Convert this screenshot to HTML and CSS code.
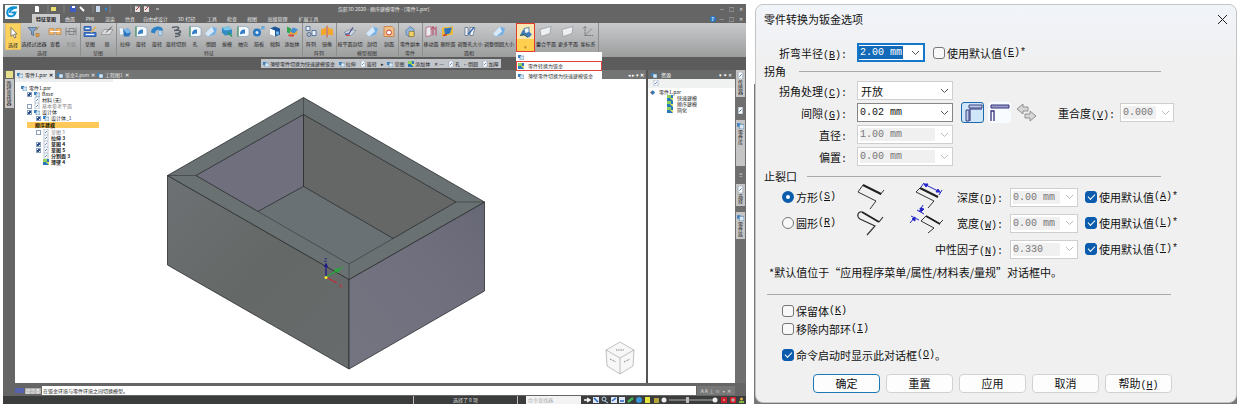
FILE: index.html
```html
<!DOCTYPE html>
<html lang="zh-CN">
<head>
<meta charset="utf-8">
<title>零件转换为钣金</title>
<link rel="stylesheet" href="styles.css">
</head>
<body>
<svg class="defs" aria-hidden="true">
  <symbol id="i-arrow" viewBox="0 0 14 12"><path d="M5 1v9l2-2 1.500 3.500 1.500-.7L8.500 7.500h2.500z" fill="#fff" stroke="#555" stroke-width=".7"/></symbol>
  <symbol id="i-filter" viewBox="0 0 14 12"><path d="M1 2h9L6.500 6v4L4.500 9V6z" fill="#7fa6d0" stroke="#456" stroke-width=".6"/><path d="M9 5l3-4M9 8h3v3H9z" fill="#e0a050" stroke="#b87a30" stroke-width=".8"/></symbol>
  <symbol id="i-view" viewBox="0 0 14 12"><path d="M1 3h5v6H1zM8 3h5v6H8z" fill="#f0b46a" stroke="#b98a50" stroke-width=".7"/><path d="M2 6h10" stroke="#fff"/></symbol>
  <symbol id="i-link" viewBox="0 0 14 12"><path d="M2 2v8M12 2v8M2 6h10M5 3h5v6H5z" fill="none" stroke="#777" stroke-width=".8"/></symbol>
  <symbol id="i-sketch" viewBox="0 0 14 12"><path d="M1 1h7v4H1zM1 7h12v4H1z" fill="#4d86d6" stroke="#2453a0" stroke-width=".8"/><path d="M2.500 3h4M3 9h8" stroke="#fff"/><path d="M8 7l5-6" stroke="#d8b060" stroke-width="1.500"/></symbol>
  <symbol id="i-pencil" viewBox="0 0 14 12"><path d="M1 9l3-5h9l-3 5z" fill="#dcdcdc" stroke="#888" stroke-width=".7"/><path d="M6 7l6-6" stroke="#555"/></symbol>
  <symbol id="i-plane" viewBox="0 0 14 12"><path d="M1 4l11-3-1 7-9 3z" fill="#edf0f2" stroke="#92979b" stroke-width=".7"/></symbol>
  <symbol id="i-extrude" viewBox="0 0 14 12"><path d="M1 2l5 1 1 5-5 2z" fill="#eef4fa" stroke="#9ab" stroke-width=".6"/><path d="M5 4l5-1 3 4-2 4H6z" fill="#2f75bd"/><path d="M5 4l5-1 3 4-4 1z" fill="#79b7ea"/></symbol>
  <symbol id="i-revolve" viewBox="0 0 14 12"><path d="M2 1h8l3 2v7l-3 1H2z" fill="#f3f8fc" stroke="#7c99b5" stroke-width=".6"/><path d="M2 1v10" stroke="#2b8a4b"/><path d="M4 9c0-4 2-5 5-5v4c-2 0-3 0-5 1z" fill="#327dc4"/></symbol>
  <symbol id="i-sweep" viewBox="0 0 14 12"><path d="M1 7c0-7 12-8 12-2l-3 1c0-3-5-2-5 2z" fill="#2e82c8"/><path d="M8 5h4v5H9z" fill="#bcd9f1" stroke="#6893b7" stroke-width=".6"/></symbol>
  <symbol id="i-helix" viewBox="0 0 14 12"><path d="M3 2c8-2 9 2 2 3 8-1 9 3 1 3 7 0 6 3 0 3" fill="none" stroke="#555c66" stroke-width="1.500"/></symbol>
  <symbol id="i-round" viewBox="0 0 14 12"><path d="M1 8L8 1l5 2-2 6-7 2z" fill="#72b2e8"/><path d="M1 8L8 1l2 5-6 5z" fill="#d7e9f8"/></symbol>
  <symbol id="i-draft" viewBox="0 0 14 12"><path d="M2 2l7-1 3 3v5l-7 1-3-3z" fill="#348cc6"/><path d="M2 2l7-1 3 3-7 1z" fill="#7cc8e8"/><path d="M8 7l4 4" stroke="#2b9a56" stroke-width="1.500"/></symbol>
  <symbol id="i-gear" viewBox="0 0 14 12"><circle cx="5" cy="7" r="4" fill="#2d79c2"/><circle cx="5" cy="7" r="1.500" fill="#dcecf8"/><path d="M8 5l4-4M9 1h3v3" stroke="#6aa7d8" stroke-width="1.200" fill="none"/></symbol>
  <symbol id="i-cube" viewBox="0 0 14 12"><path d="M2 3l5-2 5 2v6l-5 2-5-2z" fill="#1e5799"/><path d="M2 3l5 2v6L2 9z" fill="#fff"/><path d="M8 6h3v3H8z" fill="#71b6ef"/></symbol>
  <symbol id="i-body" viewBox="0 0 14 12"><path d="M2 1l4 2v5L2 7z" fill="#35a450"/><path d="M5 5h7v4H5z" fill="#e9a53a"/><path d="M8 2l5 2-4 4-4-2z" fill="#418fd2"/><path d="M3 9h6v2H4z" fill="#d4483c"/></symbol>
  <symbol id="i-pattern" viewBox="0 0 14 12"><path d="M2 1h4v4H2zM8 5h4v5H8z" fill="#edf2f8" stroke="#3c5f98" stroke-width=".8"/><circle cx="5" cy="9" r="2" fill="none" stroke="#3c5f98" stroke-width=".8"/></symbol>
  <symbol id="i-mirror" viewBox="0 0 14 12"><path d="M1 4l5-2v7l-5 1zM13 4L8 2v7l5 1z" fill="#f4a62c"/><path d="M7 0v12" stroke="#d9542b"/></symbol>
  <symbol id="i-cut" viewBox="0 0 14 12"><path d="M1 7l6-3 6 1-5 5z" fill="#cdd9e6" stroke="#6c7d90" stroke-width=".6"/><path d="M2 9l4-1 4-6" stroke="#4e4a8b" fill="none" stroke-width="1.200"/><path d="M3 10h4" stroke="#c44"/></symbol>
  <symbol id="i-section" viewBox="0 0 14 12"><path d="M2 1h8l2 2v8H2z" fill="#f4c08a" stroke="#c67a43" stroke-width=".8"/><circle cx="7" cy="7" r="2.500" fill="#fff" stroke="#c43d2c"/></symbol>
  <symbol id="i-copy" viewBox="0 0 14 12"><path d="M3 5l4-4 4 3v6l-5 1-3-2z" fill="#8fb6dc" stroke="#44648b" stroke-width=".6"/><path d="M6 6h5v5H6z" fill="#f1d16a" stroke="#856a20" stroke-width=".6"/></symbol>
  <symbol id="i-move" viewBox="0 0 14 12"><path d="M2 2l5-1v9l-5 1z" fill="#e9edf3" stroke="#b15370" stroke-width=".7"/><path d="M9 10V2M7 4l2-3 2 3M12 1v9" stroke="#b43f5e" fill="none"/></symbol>
  <symbol id="i-del" viewBox="0 0 14 12"><path d="M1 2l11-1v8L1 11z" fill="#f0bc35"/><path d="M3 3l8-1-2 6-5 1z" fill="#2d75bd"/><path d="M2 10l4-1" stroke="#c33" stroke-width="1.500"/></symbol>
  <symbol id="i-resize" viewBox="0 0 14 12"><path d="M2 2h3v8H2zM7 2h5l-2 8H7z" fill="#eef3f8" stroke="#536887" stroke-width=".7"/><path d="M5 9l6-7" stroke="#3166ae" stroke-width="1.200"/></symbol>
  <symbol id="i-sheet" viewBox="0 0 14 12"><path d="M1 9l3-6 3 2 2-1 4 4-3 3-5-2z" fill="#3f7cbd"/><path d="M5 2l5-1v5L6 7z" fill="#f4f7fa" stroke="#3b6da5" stroke-width=".8"/><path d="M1 9l4-1 4 3" stroke="#2e5e42" fill="none"/></symbol>
  <symbol id="i-axes" viewBox="0 0 14 12"><path d="M4 1v9h8M4 10l7-7M2 3l2-2 2 2" fill="none" stroke="#666" stroke-width=".8" stroke-dasharray="2 .6"/></symbol>
  <symbol id="i-part" viewBox="0 0 6 6"><path d="M0 1h3v3H0z" fill="#3c83c4"/><path d="M2 2h4v4H2z" fill="#d5e7f5" stroke="#41719b" stroke-width=".5"/></symbol>
  <symbol id="i-doc" viewBox="0 0 6 6"><path d="M1 0h4v6H1z" fill="#fff" stroke="#7a8ca5" stroke-width=".5"/><path d="M2 4l2-2" stroke="#3a72b6" stroke-width=".8"/></symbol>
  <symbol id="i-green" viewBox="0 0 6 6"><path d="M0 0h6v6H0z" fill="#2878be"/><path d="M0 0h4v3H0z" fill="#8fd05b"/><path d="M3 3h3v3z" fill="#e6e35b"/></symbol>
  <symbol id="chev" viewBox="0 0 9 6"><path d="M1 1l3.500 3.500L8 1" fill="none" stroke="currentColor" stroke-width="1"/></symbol>
</svg>

<main class="page">
<section class="app">
  <header class="title">
    <svg class="logo" viewBox="0 0 14 14"><rect width="14" height="14" fill="#f4fbff"/><path d="M12 2.500C6 1 2 4 2.200 8c.3 4.500 6.800 4.500 8.300-.5H6.500M12 2.500C8 3 5 5 4.500 8" fill="none" stroke="#0b8ed2" stroke-width="1.900"/></svg>
    <div class="title-main">
      <div class="caption">
        <div class="quick">
          <svg viewBox="0 0 130 8"><path d="M5 1h3l1 1v5H5z" fill="#fff"/><path d="M18 0v8M34 0v8M63 0v8M80 0v8M101 0v8" stroke="#999" stroke-width=".6"/><path d="M21 2h5v4h-5z" fill="#e9df6e"/><path d="M40 1h6v6h-6z" fill="#3d5cc4"/><path d="M42 1h3v2h-3z" fill="#fff"/><path d="M50 2l4 4" stroke="#fff" stroke-width="2"/><path d="M66 1h4v6h-4z" fill="#c8d8ec"/><path d="M74 4l3-2v4z" fill="#2a8ad8"/><path d="M105 1l5 1v5h-5zM114 1l5 1v5h-5z" fill="#e3e0e0"/><path d="M106 5l3-3M115 5l3-3" stroke="#c33"/><path d="M126 4h3" stroke="#ddd"/></svg>
        </div>
        <h1>浩辰3D 2020 - 顺序建模零件 - [零件1.par]</h1>
        <span class="win">—　□　✕</span>
      </div>
      <nav class="tabs">
        <a class="on" href="#home">特征草图</a><a href="#s">曲面</a><a href="#p">PMI</a><a href="#r">渲染</a><a href="#f">仿真</a><a class="wide" href="#d">自由式设计</a><a class="wide" href="#t">3D 打印</a><a href="#g">工具</a><a href="#j">检查</a><a href="#v">视图</a><a class="wide" href="#m">高级管理</a><a class="wide" href="#e">扩展工具</a>
        <span class="win"><b class="help">?</b>—　□　✕</span>
      </nav>
    </div>
  </header>

  <div class="ribbon">
    <div class="group"><div class="tools">
      <button class="tool t16 hot"><svg><use href="#i-arrow"/></svg>选择</button><button class="tool t26"><svg><use href="#i-filter"/></svg>选择过滤器</button><button class="tool t16"><svg><use href="#i-view"/></svg>查看</button><button class="tool t16 dim"><svg><use href="#i-link"/></svg>关联</button></div><h2>选择</h2></div>
    <div class="group"><div class="tools">
      <button class="tool t18"><svg><use href="#i-sketch"/></svg>草图</button><button class="tool t16"><svg><use href="#i-pencil"/></svg>▦</button></div><h2>草图</h2></div>
    <div class="group"><div class="tools">
      <button class="tool t16"><svg><use href="#i-extrude"/></svg>拉伸</button><button class="tool t16"><svg><use href="#i-revolve"/></svg>旋转</button><button class="tool t16"><svg><use href="#i-sweep"/></svg>旋转</button><button class="tool t22"><svg><use href="#i-helix"/></svg>旋转切割</button><button class="tool t16"><svg><use href="#i-revolve"/></svg>孔</button><button class="tool t16"><svg><use href="#i-round"/></svg>倒圆</button><button class="tool t16"><svg><use href="#i-draft"/></svg>拔模</button><button class="tool t16"><svg><use href="#i-revolve"/></svg>抽壳</button><button class="tool t16"><svg><use href="#i-gear"/></svg>筋板</button><button class="tool t16"><svg><use href="#i-cube"/></svg>倾斜</button><button class="tool t18"><svg><use href="#i-body"/></svg>添加体</button></div><h2>特征</h2></div>
    <div class="group"><div class="tools">
      <button class="tool t16"><svg><use href="#i-pattern"/></svg>阵列</button><button class="tool t16"><svg><use href="#i-mirror"/></svg>镜像</button></div><h2>阵列</h2></div>
    <div class="group"><div class="tools">
      <button class="tool t26"><svg><use href="#i-cut"/></svg>按平面剖切</button><button class="tool t18"><svg><use href="#i-round"/></svg>剖切</button><button class="tool t16"><svg><use href="#i-section"/></svg>剖面</button></div><h2>模型视图</h2></div>
    <div class="group"><div class="tools">
      <button class="tool t22"><svg><use href="#i-copy"/></svg>零件副本</button></div><h2>零件</h2></div>
    <div class="group plain"><div class="tools">
      <button class="tool t16"><svg><use href="#i-move"/></svg>移动面</button><button class="tool t18"><svg><use href="#i-del"/></svg>删除面</button><button class="tool t26"><svg><use href="#i-resize"/></svg>调整孔大小</button><button class="tool t32"><svg><use href="#i-round"/></svg>调整倒圆大小</button></div><h2>面相</h2></div>
    <div class="convert">
      <button class="convert-btn" aria-label="转换"><svg><use href="#i-sheet"/></svg><span>▾</span></button>
      <ul class="menu">
        <li><svg><use href="#i-part"/></svg></li>
        <li class="picked"><svg><use href="#i-green"/></svg>零件转换为钣金</li>
        <li><svg><use href="#i-part"/></svg>薄壁零件切换为快速建模钣金</li>
      </ul>
    </div>
    <div class="group"><div class="tools">
      <button class="tool t22"><svg><use href="#i-plane"/></svg>重合平面</button><button class="tool t22"><svg><use href="#i-plane"/></svg>更多平面</button><button class="tool t18"><svg><use href="#i-axes"/></svg>坐标系</button></div></div>
  </div>

  <div class="band">
    <div class="floatbar">
      <span><svg><use href="#i-part"/></svg>薄壁零件切换为快速建模钣金</span><span><svg><use href="#i-part"/></svg>拉伸</span><span><svg><use href="#i-doc"/></svg>旋转</span><span>▸</span><span><svg><use href="#i-part"/></svg>草图</span><span><svg><use href="#i-green"/></svg>添加体</span><span>✕ …</span><span><svg><use href="#i-doc"/></svg>孔</span><span>⌐ 倒圆</span><span><svg><use href="#i-doc"/></svg>加厚</span>
    </div>
  </div>

  <div class="work">
    <aside class="left"><i class="star"></i><span class="vert">路径查找器</span></aside>
    <section class="view">
      <div class="docs">
        <button class="doc on"><svg><use href="#i-part"/></svg>零件1.par <b>✕</b></button><button class="doc"><svg><use href="#i-part"/></svg>钣金2.psm <b>✕</b></button><button class="doc"><svg><use href="#i-part"/></svg>工程图1 <b>✕</b></button>
        <span class="docs-end">◂ ▸ ▾ <b>✕</b></span>
      </div>
      <div class="canvas">
        <svg class="model" viewBox="15 79 631 304" preserveAspectRatio="xMinYMin meet">
          <defs>
            <linearGradient id="gf" x1="0" y1="0" x2="1" y2="1"><stop offset="0" stop-color="#6d7174"/><stop offset=".5" stop-color="#646866"/><stop offset="1" stop-color="#686b6c"/></linearGradient>
            <linearGradient id="gr" x1="0" y1="1" x2="1" y2="0"><stop offset="0" stop-color="#747581"/><stop offset=".6" stop-color="#706f7e"/><stop offset="1" stop-color="#676876"/></linearGradient>
          </defs>
          <g stroke="#2b2d2e" stroke-width=".8" stroke-linejoin="round">
            <path d="M167.500 175.500L349 279.500V369L167.500 265z" fill="url(#gf)"/>
            <path d="M349 279.500L484.500 202v89L349 369z" fill="url(#gr)"/>
            <path d="M303.500 97.500L167.500 175.500 349 279.500 484.500 202z" fill="#6a7173"/>
            <path d="M303.500 114.500L196 175.500 258 211.500 303.500 186.500z" fill="#6f6f7e"/>
            <path d="M303.500 114.500V186.500L393 238.500 456 202z" fill="#646766"/>
            <path d="M303.500 186.500L258 211.500 349 264 393 238.500z" fill="#697174" stroke-width=".5"/>
            <path d="M303.500 97.500v17M167.500 175.500H196M349 264v15.500M484.500 202H456" fill="none" stroke-width=".5"/>
          </g>
          <g fill="none" stroke-width="1.300"><path d="M326 277V264M324.500 267l1.500-3 1.500 3" stroke="#1d1b91"/><path d="M326 277l14-8M334 270l6-1-3 4" stroke="#27a83d"/><path d="M326 277l11 6" stroke="#c22d35"/></g>
          <circle cx="326" cy="277.500" r="1.500" fill="#fbec2d"/>
          <g class="axis"><text x="324" y="262" fill="#1d1b91">Z</text><text x="341" y="270" fill="#27a83d">Y</text><text x="339" y="288" fill="#c22d35">X</text></g>
          <g fill="#f7f7f7" stroke="#999" stroke-width=".6"><path d="M620 342l14 8-1 16-13 8-13-8-1-16z"/><path d="M606 350l14 8 14-8M620 358v16" fill="none"/><path d="M610 359l6 3M624 362l6-3M616 350h8" stroke="#777" stroke-width="1" stroke-dasharray="1 .7"/></g>
        </svg>
        <div class="tree">
          <div class="r0"><svg><use href="#i-part"/></svg>零件1.par</div>
          <label class="r1"><input type="checkbox" checked><svg><use href="#i-part"/></svg>Base</label>
          <div class="r2"><svg><use href="#i-doc"/></svg>材料 (无)</div>
          <label class="r1 dim"><input type="checkbox"><svg><use href="#i-doc"/></svg>基本参考平面</label>
          <label class="r1"><input type="checkbox" checked><svg><use href="#i-part"/></svg>设计体</label>
          <label class="r3"><input type="checkbox" checked><svg><use href="#i-part"/></svg>设计体_1</label>
          <div class="seq">顺序建模</div>
          <label class="r3 dim"><input type="checkbox"><svg><use href="#i-doc"/></svg>草图 3</label>
          <div class="r4"><svg><use href="#i-doc"/></svg><b>拉伸 3</b></div>
          <label class="r3"><input type="checkbox" checked><svg><use href="#i-doc"/></svg><b>草图 4</b></label>
          <label class="r3"><input type="checkbox" checked><svg><use href="#i-doc"/></svg><b>草图 5</b></label>
          <div class="r4"><svg><use href="#i-doc"/></svg><b>分割面 3</b></div>
          <div class="r4"><svg><use href="#i-green"/></svg><b>薄壁 4</b></div>
        </div>
      </div>
    </section>
    <aside class="pane">
      <div class="pane-head"><svg><use href="#i-part"/></svg>资源<span>▾ ✦ ✕</span></div>
      <div class="pane-tools"><svg><use href="#i-doc"/></svg></div>
      <ul class="pane-list"><li class="root"><i>◆</i>零件1.par</li><li><svg><use href="#i-green"/></svg>快速建模</li><li><svg><use href="#i-green"/></svg>顺序建模</li><li><svg><use href="#i-green"/></svg>简化</li></ul>
    </aside>
    <aside class="right">
      <span class="vert lite"><svg><use href="#i-doc"/></svg>传感器</span>
      <svg class="gap-b"><use href="#i-doc"/></svg>
      <span class="vert tall"><svg><use href="#i-part"/></svg>零件库</span>
      <span class="dots">⠿</span>
      <span class="vert lite"><svg><use href="#i-doc"/></svg>选择</span>
      <span class="vert lite"><svg><use href="#i-part"/></svg>零件族</span>
    </aside>
  </div>

  <div class="prompt"><b></b><i>提示条</i><p>在钣金环境与零件环境之间切换模型。</p><span>A A ⊥ ≡ ▪ ✕</span></div>
  <footer class="status">
    <span class="st-a"></span><span class="st-b">选择了 0 项</span><input class="finder" aria-label="命令查找器" placeholder="命令查找器">
    <svg class="st-icons" viewBox="0 0 165 8"><path d="M3 4h5M6 2l3 2-3 2" stroke="#fff" fill="none" stroke-width="1.300"/><path d="M12 1h6v6h-6zM30 1h6v6h-6zM38 1h6v6h-6z" fill="#dce9fa"/><path d="M13 2l4 4M31 5l4-3M39 5h4" stroke="#2d65bf" stroke-width="1.500"/><circle cx="23" cy="3" r="2" fill="none" stroke="#b9d5ee"/><path d="M24 5l3 2" stroke="#b9d5ee"/><path d="M47 6l5-4" stroke="#42b854" stroke-width="2.500"/><circle cx="58" cy="4" r="3" fill="#3796d9"/><path d="M64 1h5v6h-5z" fill="#e6e33b"/><path d="M73 2h5v5h-5z" fill="#b4a33c"/><circle cx="83" cy="4" r="2.500" fill="#eee"/><path d="M88 4h44" stroke="#ccc" stroke-width=".8"/><path d="M105 1h3v6h-3z" fill="#bbb"/><circle cx="134" cy="4" r="2.500" fill="#eee"/><path d="M140 1h6v6h-6zM149 1h6v6h-6z" fill="#c8202a"/><path d="M142 4h2M151 3h2v2h-2z" stroke="#fff" stroke-width=".8"/><path d="M158 5h5v2h-5z" fill="#7fb83a"/><circle cx="160.500" cy="3" r="1.500" fill="#e0b04a"/></svg>
  </footer>
</section>

<section class="backdrop">
<form class="dialog" aria-labelledby="dlg">
  <header class="dlg-head"><h2 id="dlg">零件转换为钣金选项</h2><button type="button" class="close" aria-label="关闭"><svg viewBox="0 0 11 11"><path d="M1 1l9 9M10 1l-9 9" stroke="#222" fill="none"/></svg></button></header>

  <div class="row first"><label for="f1">折弯半径<span class="k">(<u>B</u>):</span></label>
    <div class="combo focus w68"><input id="f1" value="2.00 mm"><button type="button" aria-label="展开"><svg><use href="#chev"/></svg></button></div>
    <label class="check"><input type="checkbox">使用默认值<span class="k">(<u>E</u>)*</span></label></div>

  <h3 class="sec"><span>拐角</span></h3>
  <div class="corner">
    <div class="row"><label for="f2">拐角处理<span class="k">(<u>C</u>):</span></label><div class="combo w96"><select id="f2"><option>开放</option></select><svg class="over"><use href="#chev"/></svg></div></div>
    <div class="row"><label for="f3">间隙<span class="k">(<u>G</u>):</span></label><div class="combo dark w96"><input id="f3" value="0.02 mm"><button type="button" aria-label="展开"><svg><use href="#chev"/></svg></button></div>
      <div class="modes">
        <button type="button" class="mode on" aria-label="折弯"><svg viewBox="0 0 21 19"><path d="M4 18V7h3v11zM7 2h13v3H7z" fill="#b9cde6" stroke="#31327a" stroke-width=".9"/><path d="M8 18V6h12" fill="none" stroke="#31327a" stroke-width="1.100"/></svg></button>
        <button type="button" class="mode" aria-label="折弯和面"><svg viewBox="0 0 21 19"><path d="M2 2h18v3H2z" fill="#9a9fc9" stroke="#34347c" stroke-width="1"/><path d="M2 18V8h3v10" fill="none" stroke="#34347c" stroke-width="1.300"/></svg></button>
        <button type="button" class="mode bare" aria-label="翻转"><svg viewBox="0 0 21 19"><path d="M1 6l6-5v3h5v4H7v3zM20 13l-6 5v-3H9v-4h5V8z" fill="#d6d6d6" stroke="#888" stroke-width=".9"/></svg></button>
      </div>
      <label for="f4">重合度<span class="k">(<u>V</u>):</span></label><div class="combo w54 off"><input id="f4" value="0.000" disabled><button type="button" disabled aria-label="展开"><svg><use href="#chev"/></svg></button></div></div>
    <div class="row"><label for="f5">直径<span class="k">:</span></label><div class="combo w96 off"><input id="f5" value="1.00 mm" disabled><button type="button" disabled aria-label="展开"><svg><use href="#chev"/></svg></button></div></div>
    <div class="row"><label for="f6">偏置<span class="k">:</span></label><div class="combo w96 off"><input id="f6" value="0.00 mm" disabled><button type="button" disabled aria-label="展开"><svg><use href="#chev"/></svg></button></div></div>
  </div>

  <h3 class="sec long"><span>止裂口</span></h3>
  <div class="relief">
    <label class="check indent"><input type="radio" name="relief" checked>方形<span class="k">(<u>S</u>)</span></label>
    <svg viewBox="0 0 30 26"><path d="M1 8L6 1l18 9M1 8l18 9-6 8M23 11l4-5" fill="none" stroke="#333" stroke-width="1"/><path d="M6 1l18 9" stroke="#222" stroke-width="2"/></svg>
    <svg viewBox="0 0 30 26"><path d="M1 8l4-4 18 9M1 8l18 9-6 7" fill="none" stroke="#333"/><path d="M5 4l18 9" stroke="#222" stroke-width="2"/><path d="M6 3l3-4M24 11l3-5M9 0l16 8M9 0l4 0-2 3zM25 8l-4 0 2-3z" fill="#2424c8" stroke="#2424c8"/></svg>
    <label for="g1" class="lab">深度<span class="k">(<u>D</u>):</span></label><div class="combo w68 off"><input id="g1" value="0.00 mm" disabled><button type="button" disabled aria-label="展开"><svg><use href="#chev"/></svg></button></div>
    <label class="check"><input type="checkbox" checked>使用默认值<span class="k">(<u>A</u>)*</span></label>

    <label class="check indent"><input type="radio" name="relief">圆形<span class="k">(<u>R</u>)</span></label>
    <svg viewBox="0 0 30 26"><path d="M5 2C1 1-1 6 3 9l15 7-8 9M22 12l4-5" fill="none" stroke="#333" stroke-width="1.200"/><path d="M5 2l17 10" stroke="#222" stroke-width="2"/></svg>
    <svg viewBox="0 0 30 26"><path d="M6 11l5-5 14 8M6 11l13 7-6 5M24 14l4-4" fill="none" stroke="#333"/><path d="M11 6l14 8" stroke="#222" stroke-width="2"/><path d="M2 0l7 4M-4 6l8 4M8-5L4 2M5-2l1 4 3-3zM-5 13l5-6M-3 9l3-2v4z" fill="#2424c8" stroke="#2424c8"/></svg>
    <label for="g2" class="lab">宽度<span class="k">(<u>W</u>):</span></label><div class="combo w68 off"><input id="g2" value="0.00 mm" disabled><button type="button" disabled aria-label="展开"><svg><use href="#chev"/></svg></button></div>
    <label class="check"><input type="checkbox" checked>使用默认值<span class="k">(<u>L</u>)*</span></label>

    <label for="g3" class="lab far">中性因子<span class="k">(<u>N</u>):</span></label><div class="combo w68 off"><input id="g3" value="0.330" disabled><button type="button" disabled aria-label="展开"><svg><use href="#chev"/></svg></button></div>
    <label class="check"><input type="checkbox" checked>使用默认值<span class="k">(<u>T</u>)*</span></label>
  </div>
  <p class="note">*默认值位于“应用程序菜单/属性/材料表/量规”对话框中。</p>
  <hr>
  <div class="opts">
    <label class="check"><input type="checkbox">保留体<span class="k">(<u>K</u>)</span></label>
    <label class="check"><input type="checkbox">移除内部环<span class="k">(<u>I</u>)</span></label>
    <label class="check apart"><input type="checkbox" checked>命令启动时显示此对话框<span class="k">(<u>O</u>)</span>。</label>
  </div>
  <div class="actions"><button type="button" class="ok">确定</button><button type="button">重置</button><button type="button">应用</button><button type="button">取消</button><button type="button">帮助<span class="k">(<u>H</u>)</span></button></div>
</form>
</section>
</main>
</body>
</html>
```
FILE: styles.css
```css
* { box-sizing: border-box; }
body { margin: 0; background: #fff; font: 11px/16px "Noto Sans CJK SC", sans-serif; color: #111; }
h1, h2, h3, p, ul { margin: 0; padding: 0; font-weight: 400; font-size: inherit; list-style: none; }
button, input, select { font: inherit; color: inherit; margin: 0; padding: 0; border: 0; background: none; }
svg { display: block; flex: none; }
i { font-style: normal; }
.defs { position: absolute; width: 0; height: 0; }
.page { display: grid; grid-template-columns: minmax(0, 743fr) minmax(0, 483fr); gap: 8px; padding: 4px 5px 2px 3px; min-height: 100vh; }

/* modelling window */
.app { display: flex; flex-direction: column; background: #646564; font-size: 5px; line-height: 6px; color: #222; white-space: nowrap; overflow: hidden; }
.app button { white-space: nowrap; }
.title { display: flex; gap: 5px; height: 19px; background: #656565; color: #e6e6e6; }
.logo { width: 14px; height: 14px; margin: 1px 0 0 2px; }
.title-main { flex: 1; }
.caption { display: grid; grid-template-columns: 1fr auto 1fr; align-items: center; height: 10px; padding-right: 3px; }
.quick svg { width: 130px; height: 8px; margin-left: 6px; }
.win { justify-self: end; margin-left: auto; }
.tabs { display: flex; height: 9px; align-items: center; padding: 0 3px 0 8px; }
.tabs a { color: inherit; text-decoration: none; width: 20px; text-align: center; line-height: 9px; }
.tabs a.on { width: 28px; background: #c9cbcd; color: #222; font-weight: 700; }
.tabs a.wide { width: 31px; }
.help { display: inline-block; width: 6px; border-radius: 3px; background: #2878c8; color: #fff; text-align: center; margin-right: 4px; }

.ribbon { display: flex; height: 34px; padding-left: 2px; background: linear-gradient(#c8cacc, #adafb0 60%, #9c9d9d); }
.group { display: flex; flex-direction: column; justify-content: space-between; border-right: 1px solid #8e8e8e; padding: 0 1px 1px 0; margin-bottom: 1px; }
.group.plain { border: 0; }
.group h2 { text-align: center; color: #333; }
.tools { display: flex; }
.tool { display: flex; flex-direction: column; align-items: center; gap: 3px; height: 27px; padding-top: 2px; }
.tool svg, .convert-btn svg { width: 14px; height: 13px; }
.t16 { width: 16px; } .t18 { width: 18px; } .t22 { width: 22px; } .t26 { width: 26px; } .t32 { width: 32px; }
.hot { background: #fbd25e; border: 1px solid #e5c269; }
.tool.dim { color: #888; }
.convert { position: relative; }
.convert-btn { display: flex; flex-direction: column; align-items: center; justify-content: space-between; width: 19px; height: 29px; padding: 2px 1px 1px; background: linear-gradient(#f9e6b0 55%, #ffd04f 55%); border: 1px solid #e23a2c; color: #a97b1e; }
.app .convert-btn { border: 1px solid #e23a2c; }
.menu { position: absolute; z-index: 2; top: 29px; left: 0; width: 86px; background: #fff; color: #333; }
.menu li { display: flex; align-items: center; gap: 4px; height: 9px; padding-left: 2px; }
.menu svg { width: 6px; height: 6px; }
.menu .picked { border: 1px solid #e0443c; height: 10px; padding-left: 1px; }

.band { height: 13px; padding-top: 2px; background: #5c5c5c; }
.floatbar { display: flex; align-items: center; justify-content: space-between; width: 240px; height: 9px; margin-left: 258px; padding: 0 2px; background: #c2c5c9; }
.floatbar span { display: flex; align-items: center; gap: 1px; }
.floatbar svg { width: 6px; height: 6px; }

.work { flex: 1; display: grid; grid-template-columns: 12px minmax(0, 1fr) 87px 11px; }
.left { display: flex; flex-direction: column; gap: 1px; align-items: center; }
.star { width: 7px; height: 7px; margin-top: 1px; background: #e8df8b; }
.vert { display: flex; align-items: center; gap: 1px; writing-mode: vertical-rl; background: #c5c5c5; color: #222; padding: 2px 0; width: 9px; line-height: 7px; }
.view { display: flex; flex-direction: column; border-right: 2px solid #555; }
.docs { display: flex; height: 9px; background: #737474; color: #e0e0e0; }
.doc { display: flex; align-items: center; gap: 2px; width: 40px; padding: 0 2px; }
.doc svg, .tree svg { width: 6px; height: 6px; }
.doc.on { background: #e2e4e6; color: #222; }
.docs-end { margin-left: auto; color: #fff; line-height: 9px; padding-right: 2px; }
.canvas { position: relative; flex: 1; background: #fff; min-height: 0; }
.model { width: 100%; height: auto; }
.axis { font: 5px "Liberation Sans", sans-serif; }
.tree { position: absolute; left: 0; top: 0; width: 98px; padding-top: 3px; border-top: 3px solid #eceeef; color: #222; }
.tree > * { display: flex; align-items: center; gap: 2px; height: 6px; }
.tree input { appearance: none; width: 5px; height: 5px; border: 1px solid #8aa0bd; background: #fff; }
.tree input:checked { background: #fff linear-gradient(135deg, #fff 30%, #2b4d8c 30%, #2b4d8c 70%, #fff 70%); }
.tree .dim { color: #888; }
.r0 { padding-left: 6px; }
.r1 { padding-left: 12px; }
.r2 { padding-left: 19px; }
.r3 { padding-left: 21px; }
.r4 { padding-left: 28px; }
.tree .seq { height: 8px; border: 1px solid #fff; margin-left: 11px; padding-left: 8px; background: #ffc95a; color: #221500; font-weight: 700; line-height: 6px; width: 74px; }
.pane { background: #fff; }
.pane-head { display: flex; align-items: center; gap: 4px; height: 9px; padding: 0 3px; background: #686969; color: #fff; }
.pane-head span { margin-left: auto; }
.pane svg { width: 6px; height: 6px; }
.pane-tools { height: 9px; padding: 1px 5px; background: #f0f1f1; }
.pane-list { padding-top: 1px; }
.pane-list li { display: flex; gap: 4px; align-items: center; height: 6px; padding-left: 19px; }
.pane-list .root { padding-left: 2px; }
.pane-list i { color: #3f6fa5; }
.right { display: flex; flex-direction: column; align-items: center; gap: 2px; background: #6f6f6f; }
.right svg { width: 7px; height: 7px; }
.right .gap-b { margin: 4px 0; }
.right .tall { height: 46px; }
.dots { color: #ddd; margin: 4px 0; }
.right .lite { margin-bottom: 4px; }
.prompt { display: flex; align-items: center; gap: 1px; margin: 3px 11px 0 12px; height: 9px; }
.prompt b { background: #5863b0; width: 9px; height: 5px; }
.prompt i { background: #aaa; color: #fff; width: 16px; text-align: center; }
.prompt p { flex: 1; background: #fff; height: 9px; padding-left: 1px; line-height: 9px; }
.prompt span { width: 38px; color: #ddd; background: #777; text-align: center; line-height: 9px; }
.status { display: flex; height: 8px; background: #3b3c3c; color: #ddd; margin-top: 1px; line-height: 8px; }
.st-a { flex: 1; border-right: 1px solid #bbb; }
.st-b { width: 104px; text-align: center; border-right: 1px solid #bbb; }
.finder { width: 55px; margin: 0 0 0 8px; padding-left: 2px; background: #f3f3f3; height: 8px; }
.finder::placeholder { color: #aaa; }
.st-icons { width: 165px; height: 8px; }

/* options dialog */
.backdrop { background: linear-gradient(#fff 80px, #777 80px); padding: 0 0 1px 1px; }
.dialog { min-height: 100%; border: 1px solid #c4c4c4; border-radius: 8px; background: linear-gradient(#f1f4fa, #f0f0f0 60px); overflow: hidden; white-space: nowrap; }
.k { font-family: "Liberation Mono", monospace; font-size: 10px; line-height: 1; }
.dlg-head { display: flex; justify-content: space-between; align-items: center; height: 28px; padding: 0 8px; }
.close svg { width: 11px; height: 11px; }
.row { display: flex; align-items: center; height: 19px; padding-left: 8px; }
.row > label:first-child { width: 83px; text-align: right; margin-right: 10px; }
.first { margin-top: 10px; }
.w54 { width: 54px; } .w68 { width: 68px; } .w96 { width: 96px; }
.combo { display: flex; position: relative; height: 19px; border: 1px solid #cfcfcf; background: #fff; flex: none; }
.combo input { flex: 1; min-width: 0; padding-left: 2px; font: 10px "Liberation Mono", monospace; }
.combo button { width: 15px; display: grid; place-items: center; color: #555; }
.combo svg { width: 9px; height: 6px; color: #555; }
.combo select { appearance: none; width: 100%; padding-left: 3px; }
.combo .over { position: absolute; right: 3px; top: 6px; pointer-events: none; }
.combo.dark { border-color: #868686; }
.combo.focus { border: 2px solid #1477c9; padding: 1px 0; }
.combo.focus input { flex: none; width: 44px; padding-left: 1px; background: #1269b8; color: #fff; }
.combo.focus button { margin-left: auto; }
.off input { color: #777; background: #f0f0f0; margin: 2px; padding-left: 0; }
.off svg { color: #bbb; }
.check { display: inline-flex; align-items: center; }
.check input { appearance: none; flex: none; width: 12px; height: 12px; margin-right: 2px; border: 1px solid #777; border-radius: 3px; background: #f8f8f8; }
.check input[type="radio"] { border-radius: 6px; }
.check input[type="radio"]:checked { border: 4px solid #0b5cad; background: #fff; }
.check input[type="checkbox"]:checked { border-color: #0b5cad; background: #0b5cad; position: relative; }
.check input[type="checkbox"]:checked::after { content: ""; position: absolute; left: 2px; top: 2px; width: 6px; height: 3px; border: solid #fff; border-width: 0 0 1px 1px; transform: rotate(-45deg); }
.first .check { margin-left: 8px; }
.sec { display: flex; align-items: center; gap: 13px; height: 16px; margin: 1px 75px 2px 8px; }
.sec.long { gap: 10px; margin: 2px 75px 0 8px; }
.sec::after { content: ""; flex: 1; border-top: 1px solid #aaa; }
.corner { display: grid; gap: 3px; }
.modes { display: flex; gap: 4px; margin: 0 20px 0 8px; }
.mode { width: 23px; height: 21px; padding: 0 1px; background: #f8fbff; border-radius: 3px; }
.mode svg { width: 21px; height: 19px; }
.mode.on { background: #cfe5f8; border: 1px solid #1b68ac; padding: 0; }
.mode.bare { background: none; }
.modes + label { margin-right: 5px; }
.relief { display: grid; grid-template-columns: 93px 58px 30px 58px 68px auto; grid-auto-rows: 26px; align-items: center; padding-left: 8px; }
.relief > svg { width: 30px; height: 26px; overflow: visible; }
.relief .combo { margin-left: 7px; }
.relief .check:not(.indent) { margin-left: 14px; }
.indent { padding-left: 18px; }
.lab { text-align: right; }
.far { grid-column: 1 / 5; }
.note { margin: 1px 0 13px 13px; line-height: 18px; }
hr { margin: 0 65px 7px 11px; border: 0; border-top: 1px solid #aaa; }
.opts { display: grid; padding-left: 26px; grid-auto-rows: 18px; }
.opts .apart { margin-top: 8px; height: 18px; }
.actions { display: flex; gap: 6px; margin: 18px 0 8px 57px; }
.actions button { width: 67px; height: 19px; border: 1px solid #d2d2d2; border-radius: 4px; background: #fdfdfd; line-height: 15px; }
.actions .ok { border-color: #1d78b4; }
```
